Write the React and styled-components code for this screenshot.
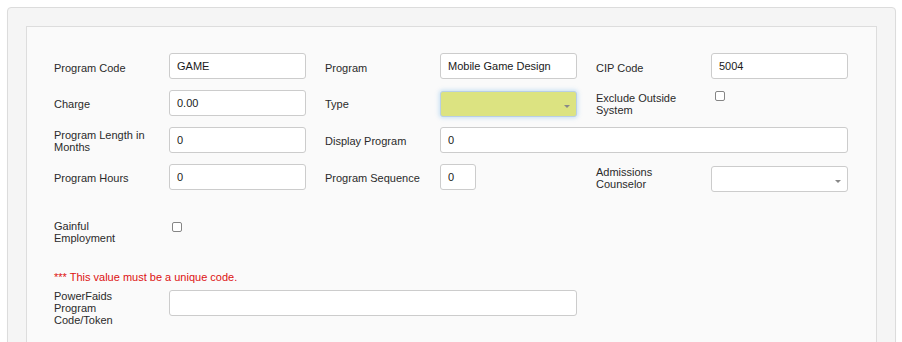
import React from "react";
import styled, { createGlobalStyle } from "styled-components";

const GlobalStyle = createGlobalStyle`
  html, body { margin: 0; padding: 0; background: #ffffff; }
  body { font-family: "Liberation Sans", Arial, sans-serif; }
  * { box-sizing: border-box; }
`;

const Page = styled.div`
  padding: 7px 6px 0 7px;
`;

const Card = styled.div`
  background: #f5f5f5;
  border: 1px solid #dcdcdc;
  border-radius: 4px;
  padding: 18px 18px 0 18px;
  box-shadow: 0 1px 1px rgba(0, 0, 0, 0.04);
`;

const Panel = styled.div`
  background: #fafafa;
  border: 1px solid #dddddd;
  padding: 26px 27px 40px 27px;
`;

const Grid = styled.div`
  display: grid;
  grid-template-columns: 115px 137px 19px 115px 137px 19px 115px 137px;
  grid-auto-rows: 26px;
  row-gap: 11px;
  align-items: ${(p) => p.$align || "center"};
  margin-top: ${(p) => p.$mt || 0}px;
`;

const Label = styled.label`
  grid-column: ${(p) => p.$col};
  font-size: 11px;
  line-height: 12px;
  color: #2a2a2a;
  padding-right: 20px;
  padding-top: ${(p) => p.$nudge || 0}px;
`;

const TextInput = styled.input`
  grid-column: ${(p) => p.$col} / span ${(p) => p.$span || 1};
  width: ${(p) => (p.$w ? `${p.$w}px` : "100%")};
  height: 26px;
  border: 1px solid #cccccc;
  border-radius: 3px;
  background: #ffffff;
  padding: 0 7px;
  font-family: "Liberation Sans", Arial, sans-serif;
  font-size: 11px;
  color: #1a1a1a;
  outline: none;
  margin: 0;
`;

const Select = styled.div`
  grid-column: ${(p) => p.$col};
  align-self: start;
  position: relative;
  height: 26px;
  margin-top: ${(p) => p.$mt || 0}px;
  border-radius: 3px;
  border: 1px solid ${(p) => (p.$focus ? "#b9cfe6" : "#cccccc")};
  background: ${(p) => (p.$focus ? "#dce381" : "#ffffff")};
  box-shadow: ${(p) =>
    p.$focus ? "0 0 4px 1px rgba(102, 175, 233, 0.35)" : "none"};

  &::after {
    content: "";
    position: absolute;
    right: 6px;
    top: 13px;
    border-left: 3px solid transparent;
    border-right: 3px solid transparent;
    border-top: 3px solid #888888;
  }
`;

const Check = styled.span`
  grid-column: ${(p) => p.$col};
  align-self: start;
  display: block;
  width: 10px;
  height: 10px;
  margin: ${(p) => p.$mt || 0}px 0 0 ${(p) => p.$ml || 0}px;
  border: 1px solid #858585;
  border-radius: 2px;
  background: #ffffff;
`;

const Note = styled.div`
  margin-top: 25px;
  font-size: 11px;
  line-height: 12px;
  color: #dd1111;
`;

export default function App() {
  return (
    <>
      <GlobalStyle />
      <Page>
        <Card>
          <Panel>
            <Grid>
              <Label $col={1} $nudge={3}>Program Code</Label>
              <TextInput $col={2} defaultValue="GAME" />
              <Label $col={4} $nudge={3}>Program</Label>
              <TextInput $col={5} defaultValue="Mobile Game Design" />
              <Label $col={7} $nudge={3}>CIP Code</Label>
              <TextInput $col={8} defaultValue="5004" />

              <Label $col={1} $nudge={2}>Charge</Label>
              <TextInput $col={2} defaultValue="0.00" />
              <Label $col={4} $nudge={2}>Type</Label>
              <Select $col={5} $focus $mt={1} />
              <Label $col={7} $nudge={1}>Exclude Outside System</Label>
              <Check $col={8} $mt={1} $ml={4} />

              <Label $col={1} $nudge={1}>Program Length in Months</Label>
              <TextInput $col={2} defaultValue="0" />
              <Label $col={4} $nudge={2}>Display Program</Label>
              <TextInput $col={5} $span={4} defaultValue="0" />

              <Label $col={1} $nudge={2}>Program Hours</Label>
              <TextInput $col={2} defaultValue="0" />
              <Label $col={4} $nudge={2}>Program Sequence</Label>
              <TextInput $col={5} $w={36} defaultValue="0" />
              <Label $col={7} $nudge={2}>Admissions Counselor</Label>
              <Select $col={8} $mt={2} />
            </Grid>

            <Grid $align="start" $mt={30}>
              <Label $col={1}>Gainful Employment</Label>
              <Check $col={2} $mt={2} $ml={3} />
            </Grid>

            <Note>*** This value must be a unique code.</Note>

            <Grid $align="start" $mt={7}>
              <Label $col={1}>PowerFaids Program Code/Token</Label>
              <TextInput $col={2} $span={4} />
            </Grid>
          </Panel>
        </Card>
      </Page>
    </>
  );
}
